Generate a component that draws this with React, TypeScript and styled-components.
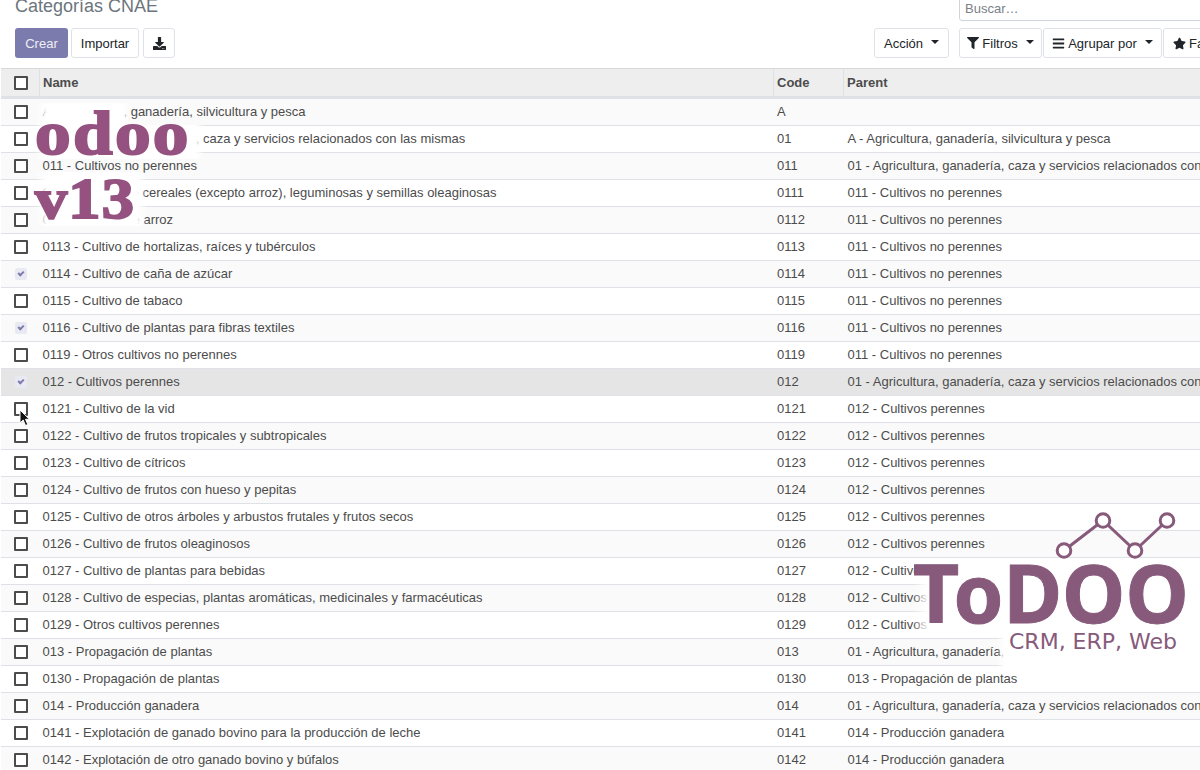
import React from 'react';
import styled, { createGlobalStyle } from 'styled-components';
import { FaBars, FaDownload, FaFilter, FaStar } from 'react-icons/fa';

type Category = {
  name: string;
  code: string;
  parent: string;
  checked?: boolean;
  hovered?: boolean;
};

const AGRI = '01 - Agricultura, ganadería, caza y servicios relacionados con las mismas';

const categories: Category[] = [
  { name: 'A - Agricultura, ganadería, silvicultura y pesca', code: 'A', parent: '' },
  { name: AGRI, code: '01', parent: 'A - Agricultura, ganadería, silvicultura y pesca' },
  { name: '011 - Cultivos no perennes', code: '011', parent: AGRI },
  { name: '0111 - Cultivo de cereales (excepto arroz), leguminosas y semillas oleaginosas', code: '0111', parent: '011 - Cultivos no perennes' },
  { name: '0112 - Cultivo de arroz', code: '0112', parent: '011 - Cultivos no perennes' },
  { name: '0113 - Cultivo de hortalizas, raíces y tubérculos', code: '0113', parent: '011 - Cultivos no perennes' },
  { name: '0114 - Cultivo de caña de azúcar', code: '0114', parent: '011 - Cultivos no perennes', checked: true },
  { name: '0115 - Cultivo de tabaco', code: '0115', parent: '011 - Cultivos no perennes' },
  { name: '0116 - Cultivo de plantas para fibras textiles', code: '0116', parent: '011 - Cultivos no perennes', checked: true },
  { name: '0119 - Otros cultivos no perennes', code: '0119', parent: '011 - Cultivos no perennes' },
  { name: '012 - Cultivos perennes', code: '012', parent: AGRI, checked: true, hovered: true },
  { name: '0121 - Cultivo de la vid', code: '0121', parent: '012 - Cultivos perennes' },
  { name: '0122 - Cultivo de frutos tropicales y subtropicales', code: '0122', parent: '012 - Cultivos perennes' },
  { name: '0123 - Cultivo de cítricos', code: '0123', parent: '012 - Cultivos perennes' },
  { name: '0124 - Cultivo de frutos con hueso y pepitas', code: '0124', parent: '012 - Cultivos perennes' },
  { name: '0125 - Cultivo de otros árboles y arbustos frutales y frutos secos', code: '0125', parent: '012 - Cultivos perennes' },
  { name: '0126 - Cultivo de frutos oleaginosos', code: '0126', parent: '012 - Cultivos perennes' },
  { name: '0127 - Cultivo de plantas para bebidas', code: '0127', parent: '012 - Cultivos perennes' },
  { name: '0128 - Cultivo de especias, plantas aromáticas, medicinales y farmacéuticas', code: '0128', parent: '012 - Cultivos perennes' },
  { name: '0129 - Otros cultivos perennes', code: '0129', parent: '012 - Cultivos perennes' },
  { name: '013 - Propagación de plantas', code: '013', parent: AGRI },
  { name: '0130 - Propagación de plantas', code: '0130', parent: '013 - Propagación de plantas' },
  { name: '014 - Producción ganadera', code: '014', parent: AGRI },
  { name: '0141 - Explotación de ganado bovino para la producción de leche', code: '0141', parent: '014 - Producción ganadera' },
  { name: '0142 - Explotación de otro ganado bovino y búfalos', code: '0142', parent: '014 - Producción ganadera' },
];

const App = () => (
  <Page>
    <GlobalStyle />
    <ControlPanel>
      <TopRow>
        <Title>Categorías CNAE</Title>
        <SearchBox>Buscar…</SearchBox>
      </TopRow>
      <ButtonRow>
        <LeftButtons>
          <PrimaryButton>Crear</PrimaryButton>
          <Button $width={68}>Importar</Button>
          <DownloadButton $width={32}><FaDownload size={13} /></DownloadButton>
        </LeftButtons>
        <RightButtons>
          <Button $width={75}>Acción<Caret /></Button>
          <SearchButtons>
            <Button $width={83}><FaFilter size={12} />Filtros<Caret /></Button>
            <Button $width={119}><FaBars size={13} />Agrupar por<Caret /></Button>
            <FavoritesButton $width={60}><FaStar size={13} />Favoritos</FavoritesButton>
          </SearchButtons>
        </RightButtons>
      </ButtonRow>
    </ControlPanel>

    <ListHead>
      <CheckCell $head><Checkbox /></CheckCell>
      <NameHead>Name</NameHead>
      <CodeHead>Code</CodeHead>
      <ParentHead>Parent</ParentHead>
    </ListHead>

    {categories.map((category, idx) => (
      <Row key={category.code} $striped={idx % 2 === 0} $hovered={category.hovered}>
        <CheckCell>
          {category.checked ? <CheckedBox /> : <Checkbox />}
        </CheckCell>
        <NameCell>{category.name}</NameCell>
        <CodeCell>{category.code}</CodeCell>
        <ParentCell>{category.parent}</ParentCell>
      </Row>
    ))}

    <Cursor viewBox="0 0 12 18" aria-hidden="true">
      <path d="M1 1v13l3.2-3 2.3 5.5 2.3-1-2.3-5.2H10.500z" fill="#111" stroke="#fff" strokeWidth="1" />
    </Cursor>

    <OdooMark>
      <OdooWord><WideGlyphs>odoo</WideGlyphs></OdooWord>
      <VersionWord><WideGlyphs>v13</WideGlyphs></VersionWord>
    </OdooMark>

    <TodooMark>
      <TrendLine viewBox="0 0 130 50" aria-hidden="true">
        <polyline points="10,40.500 49,10.500 81,40.500 113,10.500" fill="none" stroke="#875a7b" strokeWidth="3" />
        <circle cx="10" cy="40.500" r="6.800" fill="#fff" stroke="#875a7b" strokeWidth="3" />
        <circle cx="49" cy="10.500" r="6.800" fill="#fff" stroke="#875a7b" strokeWidth="3" />
        <circle cx="81" cy="40.500" r="6.800" fill="#fff" stroke="#875a7b" strokeWidth="3" />
        <circle cx="113" cy="10.500" r="6.800" fill="#fff" stroke="#875a7b" strokeWidth="3" />
      </TrendLine>
      <TodooWord>ToDOO</TodooWord>
      <TodooTag>CRM, ERP, Web</TodooTag>
    </TodooMark>
  </Page>
);

export default App;

const GlobalStyle = createGlobalStyle`
  html, body {
    margin: 0;
    height: 100%;
    background: #fff;
    overflow: hidden;
  }
`;

const Page = styled.div`
  position: relative;
  width: 1200px;
  height: 770px;
  overflow: hidden;
  background: #fff;
  font-family: "Liberation Sans", Arial, sans-serif;
  font-size: 13px;
  color: #4c4c4c;
`;

const ControlPanel = styled.div`
  height: 68px;
  padding-left: 15px;
  box-sizing: border-box;
`;

const TopRow = styled.div`
  height: 28px;
  display: flex;
  justify-content: space-between;
`;

const Title = styled.div`
  margin-top: -5px;
  font-size: 18px;
  line-height: 22px;
  color: #6c757d;
`;

const SearchBox = styled.div`
  box-sizing: border-box;
  width: 260px;
  height: 30px;
  margin-top: -9px;
  margin-right: -19px;
  padding: 9px 5px 0;
  border: 1px solid #ced4da;
  border-radius: 3px;
  font-size: 13px;
  line-height: 16px;
  color: #7a8087;
`;

const ButtonRow = styled.div`
  display: flex;
  justify-content: space-between;
`;

const LeftButtons = styled.div`
  display: flex;
  gap: 3px;
`;

const RightButtons = styled.div`
  display: flex;
  gap: 10px;
  margin-right: -23px;
`;

const SearchButtons = styled.div`
  display: flex;
  gap: 1px;
`;

const Button = styled.div<{ $width: number }>`
  box-sizing: border-box;
  flex: none;
  width: ${p => p.$width}px;
  height: 30px;
  display: flex;
  align-items: center;
  justify-content: center;
  gap: 3px;
  white-space: nowrap;
  overflow: hidden;
  background: #fff;
  border: 1px solid #dee2e6;
  border-radius: 3px;
  color: #212529;
  svg { flex: none; }
`;

const DownloadButton = styled(Button)`
  margin-left: 1px;
`;

const FavoritesButton = styled(Button)`
  justify-content: flex-start;
  padding-left: 9px;
`;

const PrimaryButton = styled.div`
  box-sizing: border-box;
  width: 53px;
  height: 30px;
  display: flex;
  align-items: center;
  justify-content: center;
  background: #7c7bad;
  border-radius: 3px;
  color: #eeeef5;
`;

const Caret = styled.span`
  width: 0;
  height: 0;
  margin-left: 5px;
  margin-bottom: 3px;
  border-top: 4px solid #212529;
  border-left: 4px solid transparent;
  border-right: 4px solid transparent;
`;

const ListHead = styled.div`
  display: flex;
  box-sizing: border-box;
  height: 31px;
  margin-left: 1px;
  background: #eee;
  border-top: 1px solid #d8d8d8;
  border-bottom: 3px solid #dee2e6;
  font-weight: 700;
  color: #4c4c4c;
`;

const Row = styled.div<{ $striped: boolean; $hovered?: boolean }>`
  display: flex;
  box-sizing: border-box;
  height: 27px;
  margin-left: 1px;
  border-bottom: 1px solid #dee2e6;
  background: ${p => (p.$hovered ? '#e5e5e5' : p.$striped ? '#fafafa' : '#fff')};
`;

const CheckCell = styled.div<{ $head?: boolean }>`
  flex: none;
  width: 39px;
  box-sizing: border-box;
  display: flex;
  align-items: center;
  padding-left: 13px;
  ${p => (p.$head ? 'border-right: 1px solid #dee2e6;' : '')}
`;

const Checkbox = styled.span`
  box-sizing: border-box;
  width: 14px;
  height: 14px;
  background: #fff;
  border: 2px solid #4c4c4c;
  border-radius: 1px;
`;

const CheckedBox = styled.span`
  box-sizing: border-box;
  width: 12px;
  height: 12px;
  margin-left: 1px;
  display: flex;
  align-items: center;
  justify-content: center;
  background: #e9e9f3;
  border-radius: 2px;
  &::before {
    content: "";
    width: 4px;
    height: 2px;
    margin-top: -2px;
    border-left: 2px solid #7c7bad;
    border-bottom: 2px solid #7c7bad;
    transform: rotate(-45deg);
  }
`;

const HeadCell = styled.div`
  box-sizing: border-box;
  display: flex;
  align-items: center;
  flex: none;
  padding-left: 3px;
`;

const NameHead = styled(HeadCell)`
  width: 734px;
  border-right: 1px solid #dee2e6;
`;

const CodeHead = styled(HeadCell)`
  width: 70px;
  border-right: 1px solid #dee2e6;
`;

const ParentHead = styled(HeadCell)`
  flex: 1;
`;

const BodyCell = styled.div`
  box-sizing: border-box;
  flex: none;
  padding-left: 3px;
  line-height: 26px;
  white-space: nowrap;
  overflow: hidden;
`;

const NameCell = styled(BodyCell)`
  width: 734px;
  padding-left: 2.500px;
`;

const CodeCell = styled(BodyCell)`
  width: 70px;
`;

const ParentCell = styled(BodyCell)`
  flex: 1;
  padding-left: 3.500px;
`;

const Cursor = styled.svg`
  position: absolute;
  left: 19px;
  top: 409px;
  width: 12px;
  height: 18px;
`;

const OdooMark = styled.div`
  position: absolute;
  left: 35px;
  top: 103px;
  font-family: "Liberation Serif", "Times New Roman", serif;
  font-weight: 700;
  color: #955280;
  -webkit-text-stroke: 2px #955280;
`;

const WideGlyphs = styled.span`
  display: inline-block;
  transform: scaleX(1.15);
  transform-origin: left center;
`;

const OdooWord = styled.div`
  width: 170px;
  height: 56px;
  font-size: 62px;
  line-height: 60px;
  letter-spacing: 2px;
  background:
    linear-gradient(90deg, rgba(255, 255, 255, 0), #fff 12px, #fff 88px, rgba(255, 255, 255, 0)) 0 0 / 95px 22px no-repeat,
    linear-gradient(90deg, rgba(255, 255, 255, 0), #fff 12px, #fff 160px, rgba(255, 255, 255, 0)) 0 22px / 170px 34px no-repeat;
`;

const VersionWord = styled.div`
  width: 112px;
  height: 54px;
  margin-top: 13px;
  font-size: 56px;
  line-height: 54px;
  letter-spacing: 1px;
  background: linear-gradient(90deg, rgba(255, 255, 255, 0), #fff 12px, #fff 102px, rgba(255, 255, 255, 0));
`;

const TodooMark = styled.div`
  position: absolute;
  left: 900px;
  top: 510px;
  width: 300px;
  color: #875a7b;
`;

const TrendLine = styled.svg`
  display: block;
  width: 130px;
  height: 50px;
  margin-left: 154px;
`;

const TodooWord = styled.div`
  margin-left: 13px;
  height: 72px;
  font-family: "Noto Sans", sans-serif;
  font-size: 80px;
  line-height: 64px;
  font-weight: 700;
  white-space: nowrap;
  -webkit-text-stroke: 1px #875a7b;
  background: linear-gradient(90deg, rgba(255, 255, 255, 0), #fff 16px);
`;

const TodooTag = styled.div`
  margin-top: -7px;
  margin-left: 97px;
  padding: 0 0 7px 12px;
  font-family: "DejaVu Sans", sans-serif;
  font-size: 22px;
  line-height: 34px;
  background: linear-gradient(90deg, rgba(255, 255, 255, 0), #fff 8px);
`;
